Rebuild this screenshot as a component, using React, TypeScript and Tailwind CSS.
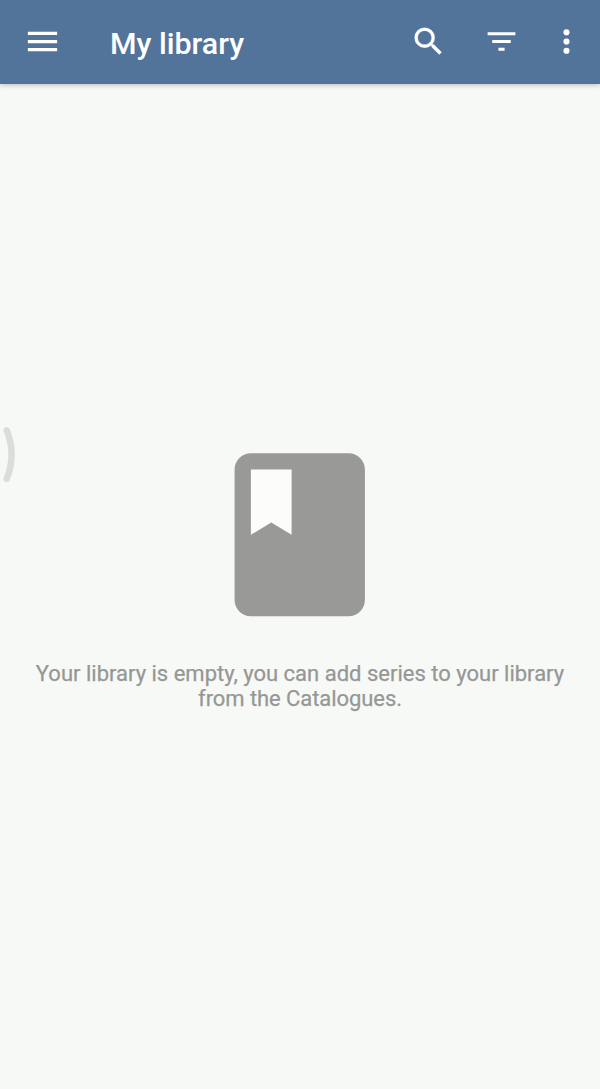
export default function App() {
  return (
    <main className="relative flex h-[1089px] w-[600px] flex-col overflow-hidden bg-[#f7f9f7] font-[Roboto,sans-serif]">
      <header className="flex h-[84px] shrink-0 items-center bg-[#52749b] text-white shadow-[0_1px_5px_rgba(0,0,0,0.25)]">
        <button aria-label="Open menu" className="ml-[23px] mb-[2px]">
          <svg className="block size-[39px]" viewBox="0 0 24 24" fill="currentColor"><path d="M3 18h18v-2H3v2zm0-5h18v-2H3v2zm0-7v2h18V6H3z" /></svg>
        </button>
        <h1 className="ml-[48px] mt-[4px] grow text-[30.4px] font-medium leading-9">My library</h1>
        <button aria-label="Search" className="mb-[2px]">
          <svg className="block size-[37px]" viewBox="0 0 24 24" fill="currentColor" stroke="currentColor" strokeWidth="0.2"><path d="M15.5 14h-.79l-.28-.27A6.471 6.471 0 0 0 16 9.5 6.5 6.5 0 1 0 9.5 16c1.61 0 3.09-.59 4.23-1.57l.27.28v.79l5 4.99L20.49 19l-4.99-5zm-6 0C7.01 14 5 11.99 5 9.5S7.01 5 9.5 5 14 7.01 14 9.5 11.99 14 9.5 14z" /></svg>
        </button>
        <button aria-label="Filter" className="ml-[36px] mb-[1px]">
          <svg className="block size-[37px]" viewBox="0 0 24 24" fill="currentColor"><path d="M10 18h4v-2h-4v2zM3 6v2h18V6H3zm3 7h12v-2H6v2z" /></svg>
        </button>
        <button aria-label="More options" className="ml-[28px] mr-[15px] mb-[1px]">
          <svg className="block size-[37px]" viewBox="0 0 24 24" fill="currentColor"><path d="M12 8a2 2 0 1 0 0-4 2 2 0 0 0 0 4zm0 2a2 2 0 1 0 0 4 2 2 0 0 0 0-4zm0 6a2 2 0 1 0 0 4 2 2 0 0 0 0-4z" /></svg>
        </button>
      </header>
      <section className="flex flex-col items-center pt-[353px]">
        <svg className="block size-[195.5px]" viewBox="0 0 24 24"><path fill="#fcfdfb" d="M5 3h7v10H5z" /><path fill="#999a98" d="M18 2H6c-1.1 0-2 .9-2 2v16c0 1.1.9 2 2 2h12c1.1 0 2-.9 2-2V4c0-1.1-.9-2-2-2zM6 4h5v8l-2.5-1.5L6 12V4z" /></svg>
        <p className="mt-[28.5px] whitespace-nowrap text-center text-[22px] leading-[25px] text-[#969795] [-webkit-text-stroke:0.25px_#969795]">Your library is empty, you can add series to your library<br /><span className="tracking-[-0.07px]">from the Catalogues.</span></p>
      </section>
      <svg className="absolute left-0 top-[424px] h-[61px] w-5" viewBox="0 0 20 61" fill="none" stroke="#dbdddb" strokeWidth="6.5" strokeLinecap="round"><path d="M6.7 6.3Q16.5 30.5 6.7 55" /></svg>
    </main>
  );
}
